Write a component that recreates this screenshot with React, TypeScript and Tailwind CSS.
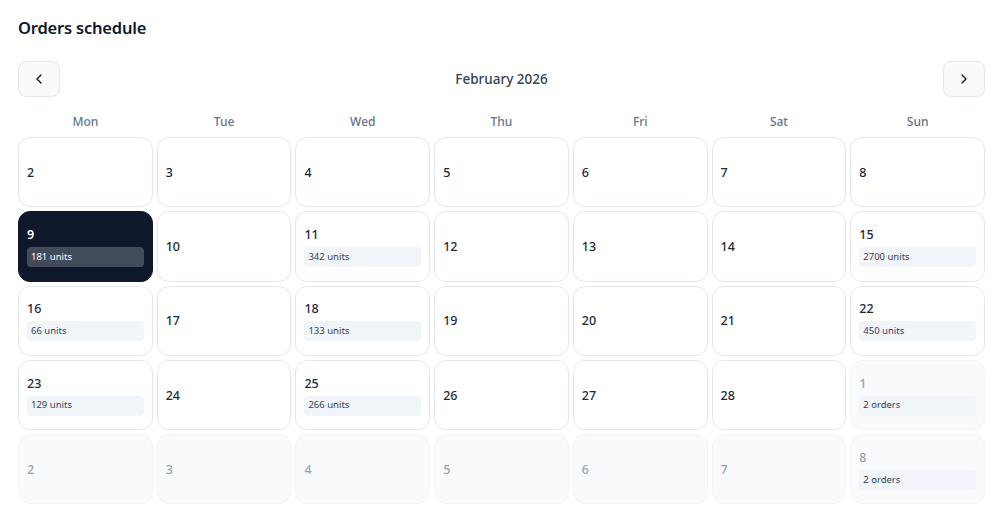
import React from "react";
import { ChevronLeft, ChevronRight } from "lucide-react";

type Cell = { day: number; badge?: string; out?: boolean; selected?: boolean };

const cells: Cell[] = [
  { day: 2 }, { day: 3 }, { day: 4 }, { day: 5 }, { day: 6 }, { day: 7 }, { day: 8 },
  { day: 9, badge: "181 units", selected: true }, { day: 10 }, { day: 11, badge: "342 units" }, { day: 12 }, { day: 13 }, { day: 14 }, { day: 15, badge: "2700 units" },
  { day: 16, badge: "66 units" }, { day: 17 }, { day: 18, badge: "133 units" }, { day: 19 }, { day: 20 }, { day: 21 }, { day: 22, badge: "450 units" },
  { day: 23, badge: "129 units" }, { day: 24 }, { day: 25, badge: "266 units" }, { day: 26 }, { day: 27 }, { day: 28 }, { day: 1, badge: "2 orders", out: true },
  { day: 2, out: true }, { day: 3, out: true }, { day: 4, out: true }, { day: 5, out: true }, { day: 6, out: true }, { day: 7, out: true }, { day: 8, badge: "2 orders", out: true },
];

const days = ["Mon", "Tue", "Wed", "Thu", "Fri", "Sat", "Sun"];

export default function App() {
  return (
    <div className="w-[1006px] h-[520px] bg-white pl-[18px] pr-[21px] pt-4 overflow-hidden" style={{ fontFamily: '"Noto Sans", sans-serif' }}>
      <h1 className="text-[16.5px] leading-6 font-semibold text-[#0f172a] tracking-[-0.2px]">Orders schedule</h1>
      <div className="mt-[21px] flex items-center justify-between">
        <button className="w-[42px] h-9 rounded-lg border border-[#e2e8f0] bg-[#f8fafc] flex items-center justify-center text-[#0f172a]">
          <ChevronLeft size={16} strokeWidth={2} />
        </button>
        <div className="text-[13.5px] font-medium text-[#334155] pt-px">February 2026</div>
        <button className="w-[42px] h-9 rounded-lg border border-[#e2e8f0] bg-[#f8fafc] flex items-center justify-center text-[#0f172a]">
          <ChevronRight size={16} strokeWidth={2} />
        </button>
      </div>
      <div className="mt-3 grid grid-cols-7 gap-1">
        {days.map((d) => (
          <div key={d} className="h-6 pt-[2px] flex items-center justify-center text-xs font-medium text-[#64748b]">{d}</div>
        ))}
      </div>
      <div className="mt-1 grid grid-cols-7 gap-1">
        {cells.map((c, i) => {
          const base = c.selected
            ? "bg-[#0f172a] border-[#0f172a]"
            : c.out
            ? "bg-[#f8fafc] border-[#f1f5f9]"
            : "bg-white border-[#e2e8f0]";
          const num = c.selected ? "text-white font-semibold" : c.out ? "text-[#94a3b8] font-medium" : "text-[#1e293b] font-medium";
          const badge = c.selected ? "bg-[#434a5a] text-white" : "bg-[#f1f5f9] text-[#334155]";
          return (
            <div key={i} className={`h-[70.3px] rounded-xl border px-2 pt-px flex flex-col justify-center ${base}`}>
              <div className={`text-[12.5px] leading-4 ${num}`}>{c.day}</div>
              {c.badge && (
                <div className={`mt-1 h-5 rounded px-1 flex items-center text-[9.5px] ${badge}`}>{c.badge}</div>
              )}
            </div>
          );
        })}
      </div>
    </div>
  );
}
